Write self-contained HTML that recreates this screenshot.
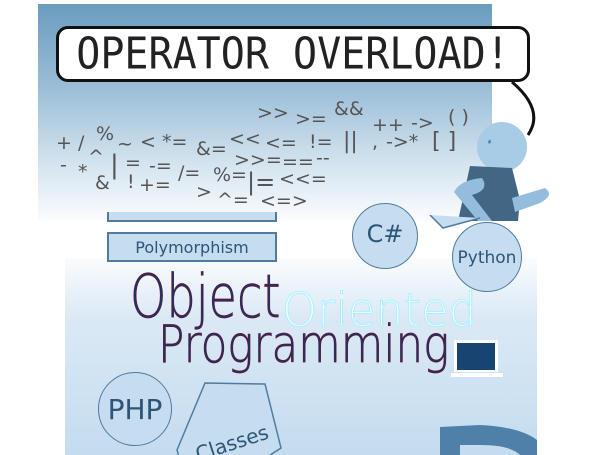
<!DOCTYPE html>
<html><head><meta charset="utf-8"><style>
html,body{margin:0;padding:0;background:#fff;width:597px;height:455px;overflow:hidden;position:relative;font-family:"Liberation Sans",sans-serif}
.top{position:absolute;left:38px;top:4px;width:454px;height:217px;background:linear-gradient(#6b9cbf 0%,#9dbfd8 40%,#d6e5f0 75%,#fbfcfe 100%)}
.bot{position:absolute;left:65px;top:258px;width:472px;height:197px;background:linear-gradient(#fafcfe 0%,#dbe9f5 30%,#c4dcef 100%)}
.bubble{position:absolute;left:56px;top:26px;width:474px;height:56px;border:3px solid #111;border-radius:12px;background:#fff;box-sizing:border-box;font-family:"DejaVu Sans Mono",monospace;font-size:40px;line-height:50px;text-align:center;color:#222}
.bubble span{display:inline-block;transform:scaleY(1.1)}
.o{position:absolute;font-family:"DejaVu Sans",sans-serif;color:#555;font-size:19px;white-space:pre;line-height:1}
.box{position:absolute;background:#c6ddef;border:2px solid #4f7ba0;box-sizing:border-box}
.circ{position:absolute;border-radius:50%;background:#c6ddef;border:1.5px solid #4f7ba0;box-sizing:border-box;text-align:center;color:#2d5577;font-family:"DejaVu Sans",sans-serif}
.big{position:absolute;font-family:"DejaVu Sans",sans-serif;font-weight:300;color:#1a3566;-webkit-text-stroke:0.7px #6a1030;white-space:nowrap;transform-origin:left top}
</style></head><body>
<div class="top"></div>
<div class="bot"></div>
<div class="bubble"><span>OPERATOR OVERLOAD!</span></div>
<svg style="position:absolute;left:0;top:0" width="597" height="455">
<path d="M512 82 Q545 110 528 135" stroke="#111" stroke-width="3" fill="none"/>
<circle cx="502" cy="147" r="25" fill="#a9cce6"/>
<path d="M488 142 q2 -5 3 0 a1.5 1.5 0 0 1 -3 0z" fill="#4c87b8"/>
<path d="M470 166 L512 168 L520 200 L518 221 L458 221 Z" fill="#426683"/>
<path d="M512 198 L545 188 Q555 195 540 203 L515 212Z" fill="#94bcdc"/>
<path d="M482 178 Q460 180 454 192 L478 221 L492 221 L472 195 Q490 190 482 178Z" fill="#94bcdc"/>
</svg>
<div class="o" style="left:257px;top:104px">&gt;&gt;</div>
<div class="o" style="left:295px;top:110px">&gt;=</div>
<div class="o" style="left:334px;top:100px">&amp;&amp;</div>
<div class="o" style="left:372px;top:116px">++</div>
<div class="o" style="left:411px;top:114px">-&gt;</div>
<div class="o" style="left:448px;top:108px">( )</div>
<div class="o" style="left:56px;top:134px">+ /</div>
<div class="o" style="left:96px;top:125px">%</div>
<div class="o" style="left:117px;top:135px">~</div>
<div class="o" style="left:140px;top:133px">&lt;</div>
<div class="o" style="left:162px;top:133px">*=</div>
<div class="o" style="left:196px;top:140px">&amp;=</div>
<div class="o" style="left:229px;top:130px">&lt;&lt;</div>
<div class="o" style="left:265px;top:134px">&lt;=</div>
<div class="o" style="left:309px;top:133px">!=</div>
<div class="o" style="left:343px;top:131px;font-size:22px">||</div>
<div class="o" style="left:372px;top:133px">,</div>
<div class="o" style="left:386px;top:133px">-&gt;*</div>
<div class="o" style="left:432px;top:131px;font-size:22px">[ ]</div>
<div class="o" style="left:60px;top:156px">-</div>
<div class="o" style="left:88px;top:148px">^</div>
<div class="o" style="left:110px;top:152px;font-size:26px">|</div>
<div class="o" style="left:125px;top:154px">=</div>
<div class="o" style="left:149px;top:157px">-=</div>
<div class="o" style="left:178px;top:164px">/=</div>
<div class="o" style="left:234px;top:151px">&gt;&gt;=</div>
<div class="o" style="left:282px;top:153px">==</div>
<div class="o" style="left:316px;top:149px">--</div>
<div class="o" style="left:78px;top:163px">*</div>
<div class="o" style="left:95px;top:174px">&amp;</div>
<div class="o" style="left:127px;top:173px">!</div>
<div class="o" style="left:139px;top:176px">+=</div>
<div class="o" style="left:196px;top:183px">&gt;</div>
<div class="o" style="left:213px;top:166px">%=</div>
<div class="o" style="left:247px;top:170px;font-size:24px">|=</div>
<div class="o" style="left:279px;top:170px">&lt;&lt;=</div>
<div class="o" style="left:217px;top:191px">^=</div>
<div class="o" style="left:260px;top:192px">&lt;=&gt;</div>
<div class="box" style="left:107px;top:212px;width:170px;height:10px;border-top:none"></div>
<div class="box" style="left:107px;top:232px;width:170px;height:30px;font-family:'DejaVu Sans',sans-serif;font-size:16px;color:#2d5577;text-align:center;line-height:27px">Polymorphism</div>
<div class="circ" style="left:352px;top:203px;width:66px;height:66px;font-size:24px;line-height:60px">C#</div>
<svg style="position:absolute;left:425px;top:215px" width="60" height="20"><path d="M5 0 L18 13 L55 3" stroke="#4f7ba0" fill="#c6ddef" stroke-width="1.5"/></svg>
<div class="circ" style="left:452px;top:222px;width:70px;height:70px;font-size:17px;line-height:70px">Python</div>
<div class="big" style="left:130px;top:262px;font-size:60px;transform:scaleX(0.77)">Object</div>
<div class="big" style="left:282px;top:283px;font-size:46px;color:#fff;-webkit-text-stroke:1px #a8f0ff;transform:scaleX(0.97)">Oriented</div>
<div class="big" style="left:158px;top:315px;font-size:52px;transform:scaleX(0.84)">Programming</div>
<svg style="position:absolute;left:450px;top:338px" width="60" height="42"><rect x="4" y="2" width="44" height="32" fill="#fff"/><rect x="7" y="5" width="38" height="27" fill="#174470"/><rect x="1" y="35" width="52" height="4" fill="#fff"/></svg>
<div class="circ" style="left:98px;top:372px;width:74px;height:74px;font-size:28px;line-height:74px">PHP</div>
<svg style="position:absolute;left:175px;top:380px" width="110" height="75"><path d="M30 3 L90 4 L106 68 L72 90 L5 80 L2 70Z" fill="#c6ddef" stroke="#4f7ba0" stroke-width="1.5"/><text x="18" y="72" font-family="DejaVu Sans" font-size="20" fill="#2d5577" transform="rotate(-18 50 60)">Classes</text></svg>
<svg style="position:absolute;left:440px;top:425px" width="97" height="30"><path d="M0 30 L0 2 L40 0 Q80 2 97 15 L97 30 L80 30 Q70 20 40 20 L20 20 L20 30Z" fill="#4f80aa"/></svg>
</body></html>
